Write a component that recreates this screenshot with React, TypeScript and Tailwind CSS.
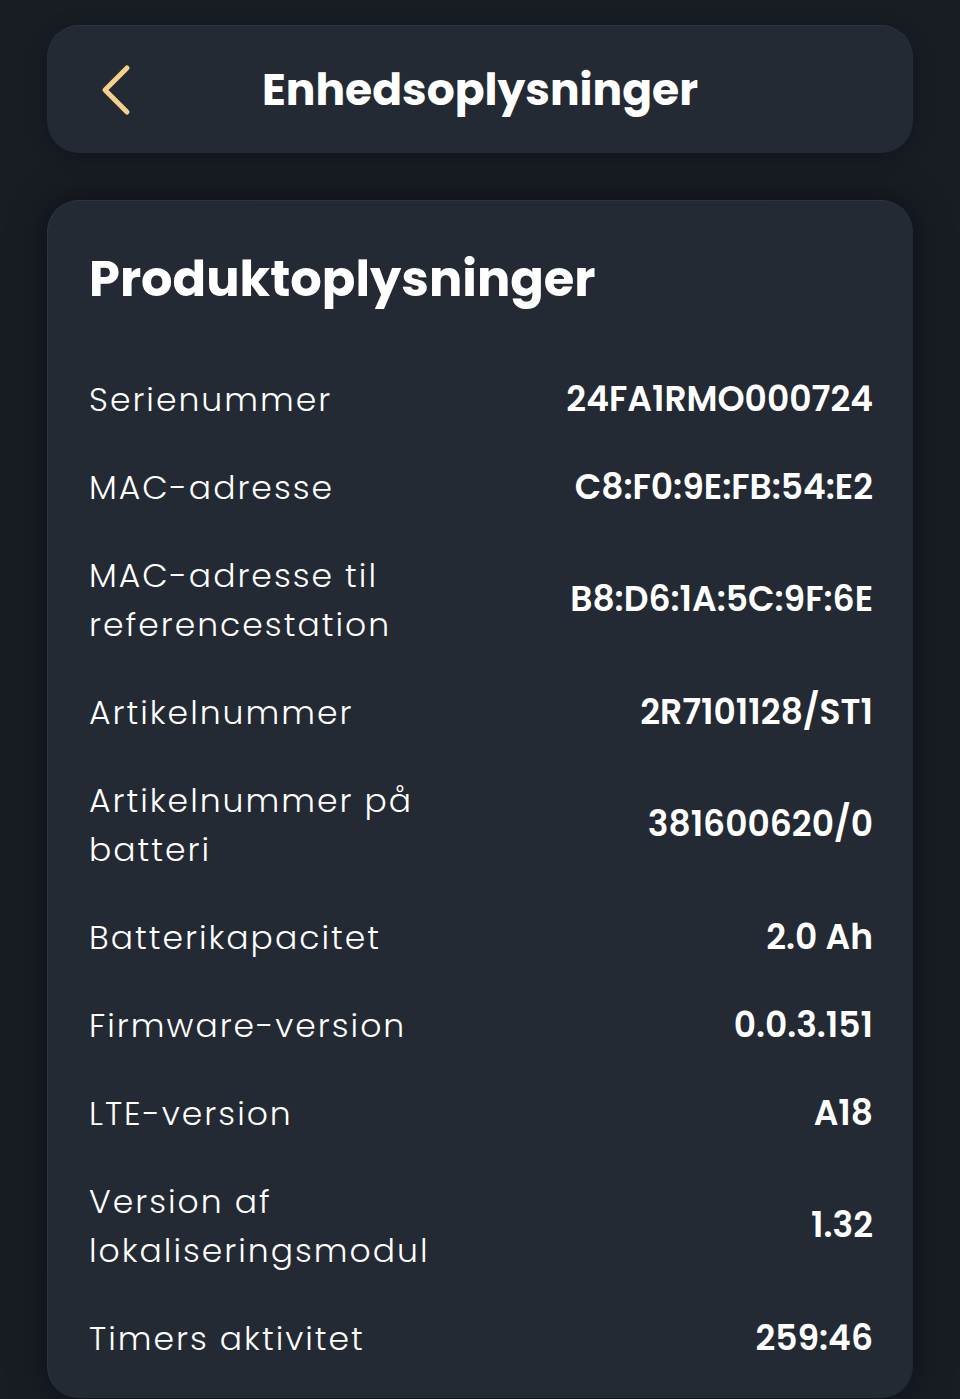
import React from "react";

interface InfoRow {
  label: string;
  value: string;
}

const rows: InfoRow[] = [
  { label: "Serienummer", value: "24FA1RMO000724" },
  { label: "MAC-adresse", value: "C8:F0:9E:FB:54:E2" },
  { label: "MAC-adresse til referencestation", value: "B8:D6:1A:5C:9F:6E" },
  { label: "Artikelnummer", value: "2R7101128/ST1" },
  { label: "Artikelnummer på batteri", value: "381600620/0" },
  { label: "Batterikapacitet", value: "2.0 Ah" },
  { label: "Firmware-version", value: "0.0.3.151" },
  { label: "LTE-version", value: "A18" },
  { label: "Version af lokaliseringsmodul", value: "1.32" },
  { label: "Timers aktivitet", value: "259:46" },
];

const ChevronLeft = () => (
  <svg width="34" height="52" viewBox="0 0 34 52" fill="none">
    <path
      d="M28 4 L6 26 L28 48"
      stroke="#f6d08a"
      strokeWidth="5"
      strokeLinecap="round"
      strokeLinejoin="round"
    />
  </svg>
);

export default function App() {
  return (
    <div className="min-h-[1399px] bg-[#181d24] px-[47px] pt-[25px] font-['Poppins','Inter',sans-serif] text-white">
      {/* header */}
      <div className="relative flex h-[128px] items-center justify-center rounded-[32px] border-t border-white/5 bg-[#232a33] shadow-[0_4px_20px_rgba(0,0,0,0.25)]">
        <button className="absolute left-[52px] top-[38px]">
          <ChevronLeft />
        </button>
        <h1 className="text-[44px] leading-[56px] font-bold">Enhedsoplysninger</h1>
      </div>

      {/* product info card */}
      <div className="mt-[47px] rounded-[32px] border-t border-l border-white/5 bg-[#232a33] pl-[41px] pr-[42px] pt-[46px] pb-[16px] shadow-[0_0_40px_rgba(0,0,0,0.45)]">
        <h2 className="mb-[44px] text-[49.5px] leading-[64px] font-bold">Produktoplysninger</h2>
        <div className="flex flex-col">
          {rows.map((row) => (
            <div key={row.label} className="flex items-center justify-between gap-6 py-[19.5px]">
              <span className="max-w-[370px] text-[33px] leading-[49px] font-light tracking-[2px]">
                {row.label}
              </span>
              <span className="mr-[-2px] text-[34.5px] leading-[49px] font-semibold">{row.value}</span>
            </div>
          ))}
        </div>
      </div>
    </div>
  );
}
